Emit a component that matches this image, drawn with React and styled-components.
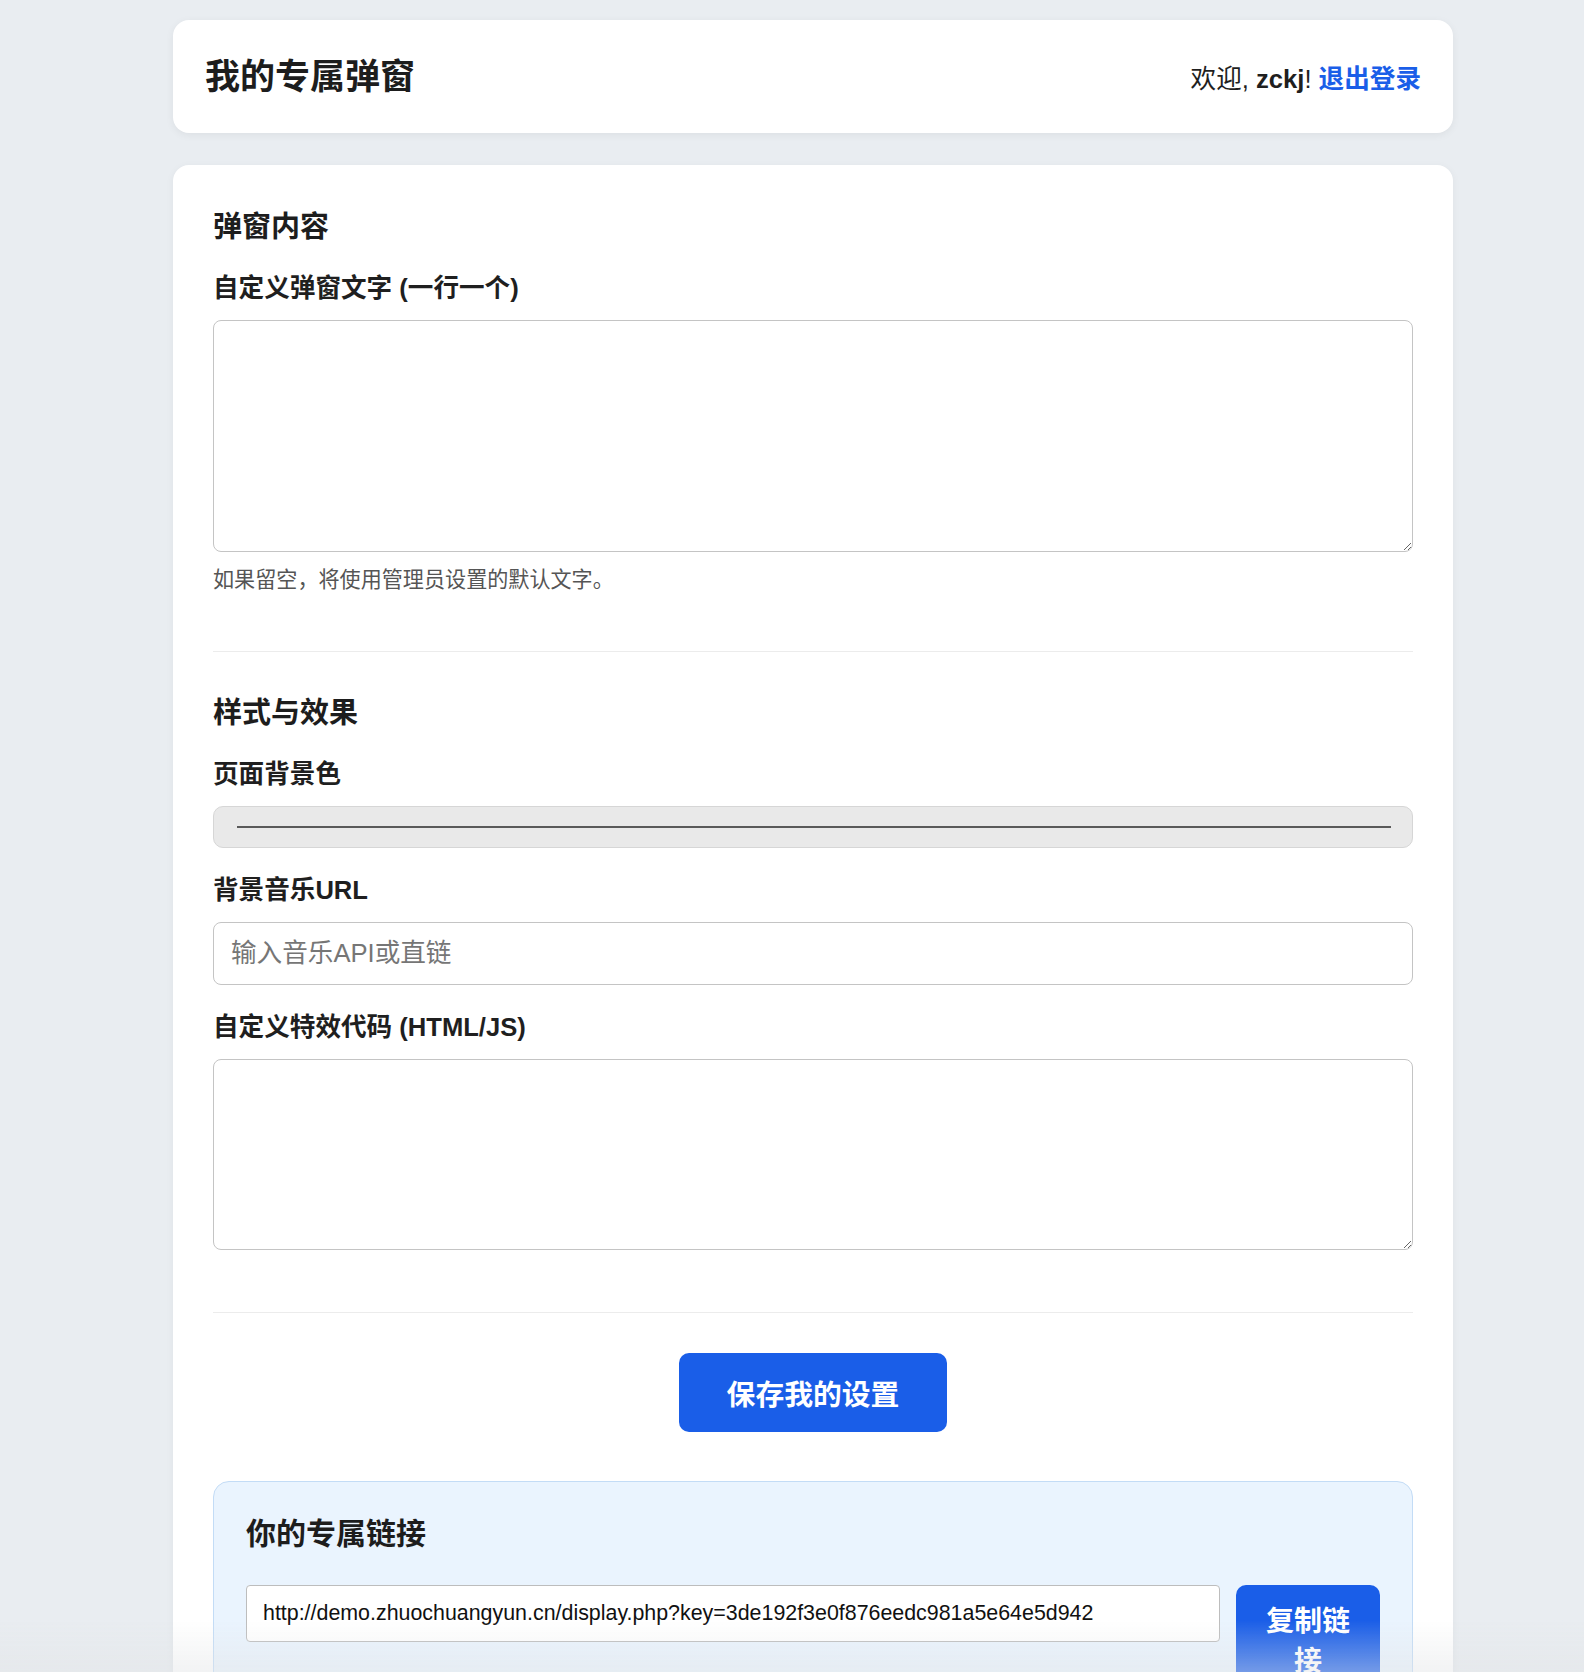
import React from "react";
import styled, { createGlobalStyle } from "styled-components";

const GlobalStyle = createGlobalStyle`
  html, body {
    margin: 0;
    padding: 0;
    background: #e9edf1;
    font-family: "Liberation Sans", "Noto Sans CJK SC", sans-serif;
    color: #1f1f1f;
  }
  * { box-sizing: border-box; }
`;

const Page = styled.div`
  width: 1280px;
  margin-left: 173px;
  padding: 20px 0 60px;
`;

const Header = styled.header`
  display: flex;
  justify-content: space-between;
  align-items: center;
  background: #fff;
  border-radius: 16px;
  padding: 32px;
  margin-bottom: 32px;
  box-shadow: 0 2px 8px rgba(0, 0, 0, 0.06);
`;

const Title = styled.h1`
  margin: 0;
  font-size: 35px;
  line-height: 49px;
  font-weight: 700;
  color: #1d1d1d;
`;

const UserInfo = styled.div`
  font-size: 25.6px;
  color: #1f1f1f;
`;

const UserName = styled.strong`
  font-weight: 700;
`;

const LogoutLink = styled.a`
  color: #1a5ee8;
  font-weight: 700;
  text-decoration: none;
  cursor: pointer;
`;

const Card = styled.main`
  background: #fff;
  border-radius: 16px;
  padding: 45px 40px 40px;
  box-shadow: 0 2px 8px rgba(0, 0, 0, 0.05);
`;

const Section = styled.section`
  border-bottom: 1px solid #ececec;
  padding-bottom: ${(p) => p.$pad}px;
  & + & {
    margin-top: 44px;
  }
`;

const SectionTitle = styled.h2`
  margin: 0 0 26px;
  font-size: 29px;
  line-height: 34px;
  font-weight: 700;
  color: #1d1d1d;
`;

const Field = styled.div`
  margin-bottom: 24px;
  &:last-child {
    margin-bottom: 0;
  }
`;

const Label = styled.label`
  display: block;
  font-size: 25.6px;
  line-height: 36px;
  font-weight: 700;
  color: #1f1f1f;
  margin-bottom: 14px;
`;

const TextArea = styled.textarea`
  display: block;
  width: 100%;
  height: ${(p) => p.$h}px;
  border: 1px solid #c4c4c4;
  border-radius: 8px;
  padding: 16px;
  font-family: inherit;
  font-size: 25.6px;
  resize: vertical;
  background: #fff;
  outline: none;
`;

const Hint = styled.p`
  margin: 13px 0 0;
  font-size: 21.1px;
  line-height: 29px;
  color: #555;
`;

const ColorField = styled.div`
  height: 42px;
  border: 1px solid #d6d6d6;
  border-radius: 10px;
  background: #e9e9e9;
  display: flex;
  align-items: center;
  padding: 0 21px 0 23px;
`;

const Swatch = styled.span`
  flex: 1;
  height: 2px;
  background: ${(p) => p.$color};
`;

const TextInput = styled.input`
  display: block;
  width: 100%;
  height: 63px;
  border: 1px solid #c4c4c4;
  border-radius: 8px;
  padding: 0 17px;
  font-family: inherit;
  font-size: 25.6px;
  color: #1f1f1f;
  background: #fff;
  outline: none;
  &::placeholder {
    color: #767676;
  }
`;

const ButtonRow = styled.div`
  display: flex;
  justify-content: center;
  margin-top: 40px;
`;

const PrimaryButton = styled.button`
  height: 79px;
  padding: 0 48px;
  border: none;
  border-radius: 10px;
  background: #1a5ee8;
  color: #fff;
  font-family: inherit;
  font-size: 28.8px;
  font-weight: 700;
  cursor: pointer;
`;

const LinkBox = styled.div`
  margin-top: 49px;
  border: 1.5px solid #c3dcf6;
  background: #eaf4fe;
  border-radius: 16px;
  padding: 34px 32px 40px;
`;

const LinkTitle = styled.h3`
  margin: 0 0 33px;
  font-size: 30px;
  line-height: 36px;
  font-weight: 700;
  color: #1d1d1d;
`;

const LinkRow = styled.div`
  display: flex;
  align-items: flex-start;
  gap: 16px;
`;

const LinkInput = styled.input`
  flex: 1;
  min-width: 0;
  height: 57px;
  border: 1px solid #bdbdbd;
  border-radius: 4px;
  padding: 0 16px;
  font-family: "Liberation Sans", sans-serif;
  font-size: 21.4px;
  color: #111;
  background: #fff;
  outline: none;
`;

const CopyButton = styled.button`
  flex: 0 0 144px;
  width: 144px;
  padding: 17px 29px;
  border: none;
  border-radius: 10px;
  background: #1a5ee8;
  color: #fff;
  font-family: inherit;
  font-size: 28px;
  line-height: 40px;
  font-weight: 700;
  cursor: pointer;
`;

const BottomFade = styled.div`
  position: fixed;
  left: 0;
  right: 0;
  bottom: 0;
  height: 52px;
  pointer-events: none;
  background: linear-gradient(
    to bottom,
    rgba(226, 228, 230, 0) 0%,
    rgba(226, 228, 230, 0.45) 100%
  );
`;

export default function App() {
  return (
    <>
      <GlobalStyle />
      <Page>
        <Header>
          <Title>我的专属弹窗</Title>
          <UserInfo>
            欢迎, <UserName>zckj</UserName>! <LogoutLink>退出登录</LogoutLink>
          </UserInfo>
        </Header>

        <Card>
          <Section $pad={57}>
            <SectionTitle>弹窗内容</SectionTitle>
            <Field>
              <Label>自定义弹窗文字 (一行一个)</Label>
              <TextArea $h={232} />
              <Hint>如果留空，将使用管理员设置的默认文字。</Hint>
            </Field>
          </Section>

          <Section $pad={62}>
            <SectionTitle>样式与效果</SectionTitle>
            <Field>
              <Label>页面背景色</Label>
              <ColorField>
                <Swatch $color="#5a5a5a" />
              </ColorField>
            </Field>
            <Field>
              <Label>背景音乐URL</Label>
              <TextInput placeholder="输入音乐API或直链" />
            </Field>
            <Field>
              <Label>自定义特效代码 (HTML/JS)</Label>
              <TextArea $h={191} />
            </Field>
          </Section>

          <ButtonRow>
            <PrimaryButton>保存我的设置</PrimaryButton>
          </ButtonRow>

          <LinkBox>
            <LinkTitle>你的专属链接</LinkTitle>
            <LinkRow>
              <LinkInput
                readOnly
                value="http://demo.zhuochuangyun.cn/display.php?key=3de192f3e0f876eedc981a5e64e5d942"
              />
              <CopyButton>复制链接</CopyButton>
            </LinkRow>
          </LinkBox>
        </Card>
      </Page>
      <BottomFade />
    </>
  );
}
